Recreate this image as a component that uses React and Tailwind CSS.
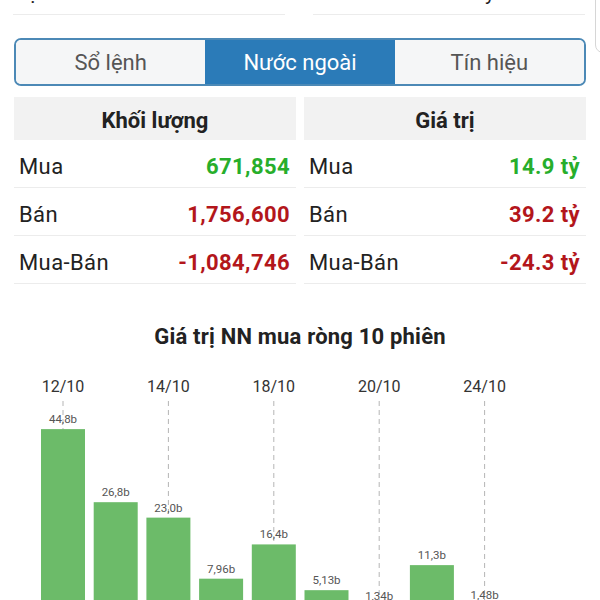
import React from 'react';

const tabs = ['Sổ lệnh', 'Nước ngoài', 'Tín hiệu'];

const volume = [
  { label: 'Mua', value: '671,854', color: 'text-[#27ae2b]' },
  { label: 'Bán', value: '1,756,600', color: 'text-[#b3161b]' },
  { label: 'Mua-Bán', value: '-1,084,746', color: 'text-[#b3161b]' },
];

const amount = [
  { label: 'Mua', value: '14.9 tỷ', color: 'text-[#27ae2b]' },
  { label: 'Bán', value: '39.2 tỷ', color: 'text-[#b3161b]' },
  { label: 'Mua-Bán', value: '-24.3 tỷ', color: 'text-[#b3161b]' },
];

const sessions = [
  { date: '12/10', value: 44.8, text: '44,8b' },
  { date: '13/10', value: 26.8, text: '26,8b' },
  { date: '14/10', value: 23.0, text: '23,0b' },
  { date: '17/10', value: 7.96, text: '7,96b' },
  { date: '18/10', value: 16.4, text: '16,4b' },
  { date: '19/10', value: 5.13, text: '5,13b' },
  { date: '20/10', value: 1.34, text: '1,34b' },
  { date: '21/10', value: 11.3, text: '11,3b' },
  { date: '24/10', value: 1.48, text: '1,48b' },
  { date: '25/10', value: -3.2, text: '-3,2b' },
];

const StatTable = ({ title, rows }) => (
  <div className="flex-1">
    <div className="h-[43px] pt-[3px] bg-[#f2f2f2] flex items-center justify-center text-[22px] font-bold text-[#222]">
      {title}
    </div>
    {rows.map((r) => (
      <div key={r.label} className="h-[48px] pt-[5px] flex items-center justify-between border-b border-[#ececec] pl-[5px] pr-[6px]">
        <span className="text-[22px] tracking-[0.4px] text-[#222]">{r.label}</span>
        <span className={`text-[22px] tracking-[0.4px] font-bold ${r.color}`}>{r.value}</span>
      </div>
    ))}
  </div>
);

const Chart = () => {
  const base = 247;
  const scale = 4.06;
  const step = 52.7;
  return (
    <svg width="600" height="260" className="block">
      {sessions.map((s, i) => {
        if (i % 2) return null;
        const cx = 63 + i * step;
        return (
          <g key={s.date}>
            <text x={cx} y={28} textAnchor="middle" fontSize="16" fill="#333" fontFamily="Roboto, sans-serif">
              {s.date}
            </text>
            <line x1={cx} y1={37} x2={cx} y2={260} stroke="#b5b5b5" strokeWidth="1" strokeDasharray="5 4" />
          </g>
        );
      })}
      {sessions.map((s, i) => {
        const cx = 63 + i * step;
        const h = Math.abs(s.value) * scale;
        const y = s.value >= 0 ? base - h : base;
        return (
          <g key={s.text}>
            <rect x={cx - 22} y={y} width="44" height={h} fill="#6cbb69" />
            <text
              x={cx}
              y={s.value >= 0 ? y - 6 : base + h + 13}
              textAnchor="middle"
              fontSize="11.5"
              fill="#555"
              fontFamily="Roboto, sans-serif"
            >
              {s.text}
            </text>
          </g>
        );
      })}
    </svg>
  );
};

export default function App() {
  return (
    <div className="relative w-[600px] h-[600px] overflow-hidden bg-white font-['Roboto',sans-serif]">
      <div className="absolute left-[595px] top-[-10px] w-[30px] h-[63px] border border-[#d6d6d6] rounded-[8px] bg-white" />

      <div className="flex gap-[28px] pl-[13px] pr-[15px]">
        <div className="flex-1 h-[15px] overflow-hidden border-b border-[#ececec]">
          <div className="-mt-[19px] pl-[6px] text-[21px] leading-[24px] text-[#222]">Lịch</div>
        </div>
        <div className="flex-1 h-[15px] overflow-hidden border-b border-[#ececec]">
          <div className="-mt-[19px] text-right pr-[90px] text-[21px] leading-[24px] text-[#222]">tỷ</div>
        </div>
      </div>

      <div className="mx-[14px] mt-[23px] h-[48px] flex border-2 border-[#4c89b6] rounded-[7px] overflow-hidden">
        {tabs.map((t, i) => (
          <div
            key={t}
            className={`flex-1 flex items-center justify-center text-[22px] ${
              i === 1 ? 'bg-[#2b7bb8] text-white' : 'bg-[#f5f6f7] text-[#555]'
            }`}
          >
            {t}
          </div>
        ))}
      </div>

      <div className="mx-[14px] mt-[11px] flex gap-[8px]">
        <StatTable title="Khối lượng" rows={volume} />
        <StatTable title="Giá trị" rows={amount} />
      </div>

      <div className="mt-[36px] text-center text-[22px] tracking-[0.2px] font-bold text-[#222]">Giá trị NN mua ròng 10 phiên</div>

      <div className="mt-[11px]">
        <Chart />
      </div>
    </div>
  );
}
